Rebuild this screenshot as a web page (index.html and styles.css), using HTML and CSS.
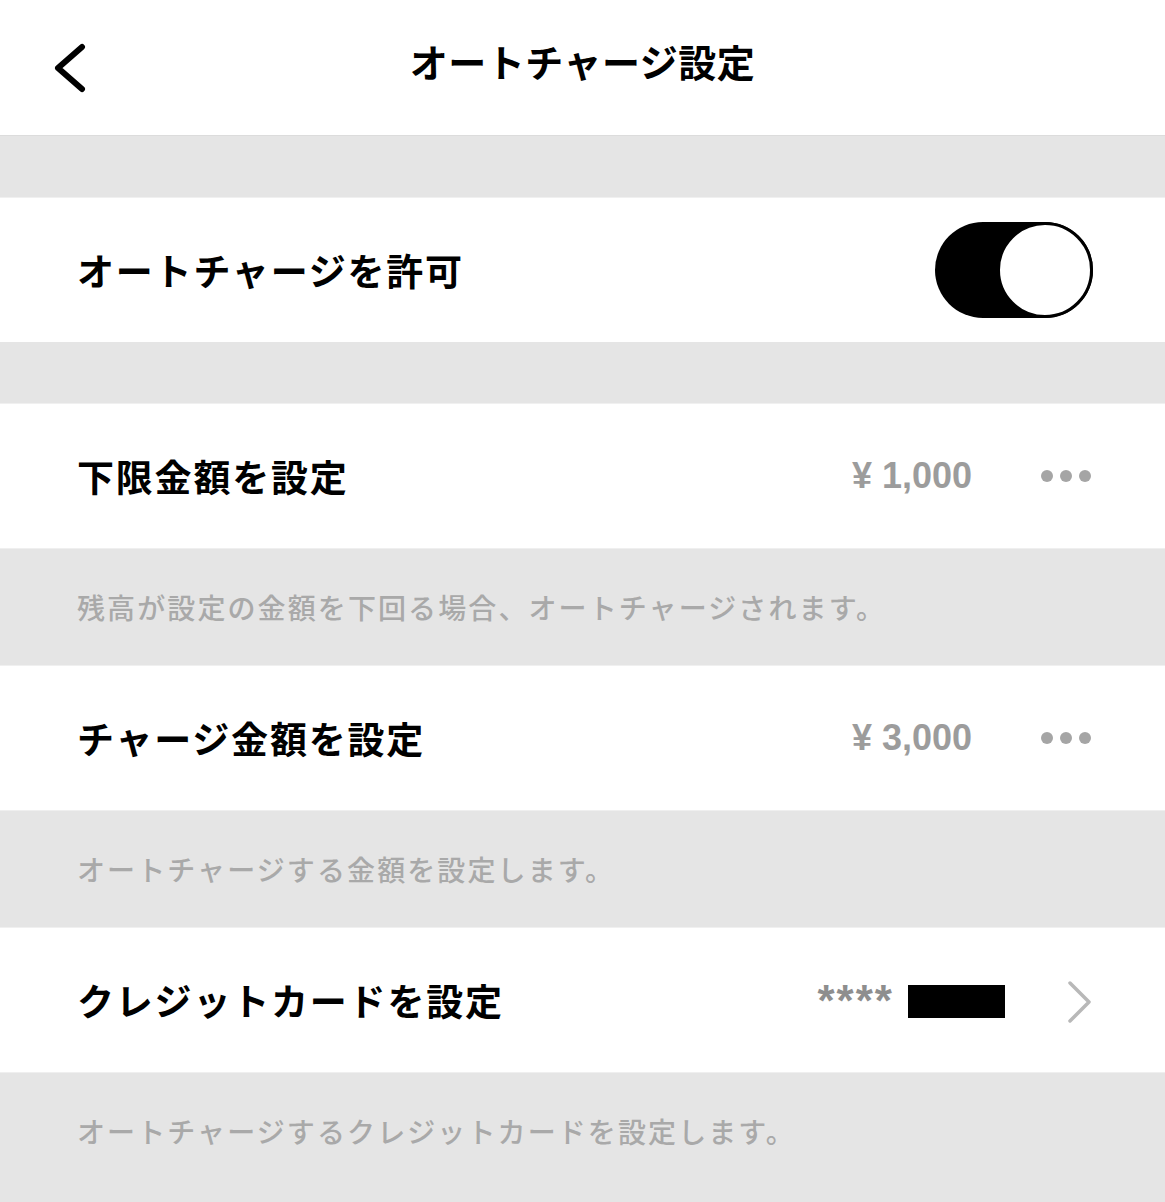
FILE: index.html
```html
<!DOCTYPE html>
<html lang="ja">
<head>
    <meta charset="UTF-8">
    <meta name="viewport" content="width=device-width, initial-scale=1.0">
    <title>オートチャージ設定</title>
    <link rel="stylesheet" href="styles.css">
</head>
<body>
    <header class="header">
        <button class="back-btn" aria-label="戻る">
            <svg viewBox="0 0 40 50" fill="none" stroke="currentColor" stroke-width="6" stroke-linecap="round" stroke-linejoin="round">
                <polyline points="32,4 8,25 32,46"></polyline>
            </svg>
        </button>
        <h1 class="title">オートチャージ設定</h1>
    </header>

    <div class="spacer"></div>

    <div class="row">
        <span class="label">オートチャージを許可</span>
        <div class="toggle on">
            <div class="knob"></div>
        </div>
    </div>

    <div class="spacer"></div>

    <div class="row">
        <span class="label">下限金額を設定</span>
        <span class="value"><span class="yen">¥</span>1,000</span>
        <span class="dots"><i></i><i></i><i></i></span>
    </div>
    <div class="desc">残高が設定の金額を下回る場合、オートチャージされます。</div>

    <div class="row">
        <span class="label">チャージ金額を設定</span>
        <span class="value"><span class="yen">¥</span>3,000</span>
        <span class="dots"><i></i><i></i><i></i></span>
    </div>
    <div class="desc">オートチャージする金額を設定します。</div>

    <div class="row">
        <span class="label">クレジットカードを設定</span>
        <span class="card-mask">****</span>
        <span class="card-hidden"></span>
        <svg class="chevron" viewBox="0 0 26 42" fill="none" stroke="currentColor" stroke-width="3.5" stroke-linecap="round" stroke-linejoin="round">
            <polyline points="3,2 22,21 3,40"></polyline>
        </svg>
    </div>
    <div class="desc last">オートチャージするクレジットカードを設定します。</div>
</body>
</html>
```

FILE: styles.css
```css
* {
    margin: 0;
    padding: 0;
    box-sizing: border-box;
}

body {
    width: 1165px;
    min-height: 1202px;
    background: #e5e5e5;
    color: #000;
    font-family: "Noto Sans CJK JP", "Noto Sans", sans-serif;
}

.header {
    position: relative;
    height: 136px;
    background: #fff;
    border-bottom: 1px solid #dcdcdc;
    display: flex;
    align-items: center;
    justify-content: center;
}

.back-btn {
    position: absolute;
    left: 50px;
    top: 43px;
    width: 40px;
    height: 50px;
    border: none;
    background: none;
    color: #000;
}

.back-btn svg {
    width: 40px;
    height: 50px;
    display: block;
}

.title {
    font-size: 38px;
    font-weight: 700;
    letter-spacing: 0.5px;
    margin-top: -15px;
}

.spacer {
    height: 61px;
    background: #e5e5e5;
}

.row {
    height: 145px;
    background: #fff;
    display: flex;
    align-items: center;
    padding: 0 72px 0 77px;
    border-top: 1px solid #f0f0f0;
}

.label {
    font-size: 37px;
    font-weight: 700;
    letter-spacing: 1.8px;
    flex: 1;
}

.value {
    font-family: "Liberation Sans", "Noto Sans CJK JP", sans-serif;
    font-size: 36px;
    font-weight: 700;
    color: #9c9c9c;
    margin-right: 69px;
}

.value .yen {
    margin-right: 10px;
}

.dots {
    display: flex;
    gap: 7px;
    margin-right: 2px;
}

.dots i {
    display: block;
    width: 12px;
    height: 12px;
    border-radius: 50%;
    background: #a5a5a5;
}

.toggle {
    width: 158px;
    height: 96px;
    border-radius: 48px;
    background: #000;
    position: relative;
}

.toggle .knob {
    position: absolute;
    right: 0;
    top: 0;
    width: 96px;
    height: 96px;
    border-radius: 50%;
    background: #fff;
    border: 3px solid #000;
}

.card-mask {
    font-family: "Liberation Sans", sans-serif;
    font-size: 44px;
    font-weight: 700;
    color: #8e8e8e;
    letter-spacing: 2px;
    line-height: 1;
    margin-top: 2px;
    margin-right: 14px;
}

.card-hidden {
    width: 97px;
    height: 33px;
    background: #000;
    margin-right: 62px;
    margin-top: 2px;
}

.chevron {
    width: 26px;
    height: 42px;
    color: #b8b8b8;
    margin-top: 4px;
}

.desc {
    height: 117px;
    display: flex;
    align-items: center;
    padding-left: 77px;
    font-size: 28px;
    font-weight: 500;
    color: #a9a9a9;
    letter-spacing: 2.1px;
    border-top: 1px solid #efefef;
}

.desc.last {
    height: 127px;
    padding-bottom: 10px;
}
```
